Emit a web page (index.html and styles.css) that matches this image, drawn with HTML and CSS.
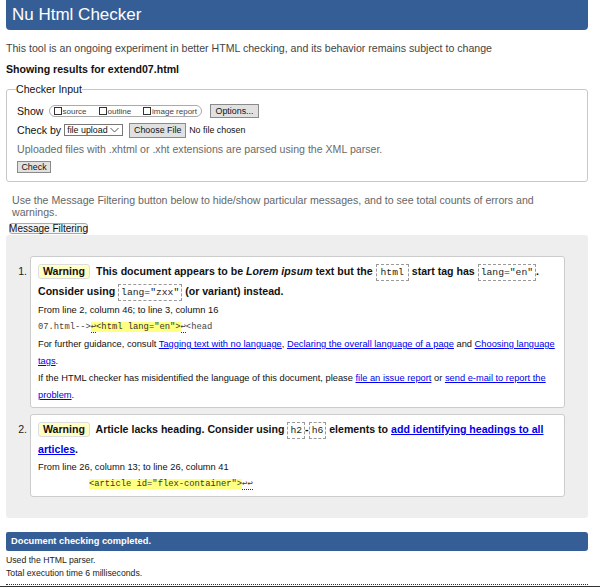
FILE: index.html
```html
<!DOCTYPE html>
<html lang="en">
<head>
<meta charset="utf-8">
<title>Nu Html Checker</title>
<link rel="stylesheet" href="styles.css">
</head>
<body>
<header class="title">Nu Html Checker</header>
<p class="intro">This tool is an ongoing experiment in better HTML checking, and its behavior remains subject to change</p>
<p class="showing">Showing results for extend07.html</p>
<fieldset class="checker">
  <legend>Checker Input</legend>
  <div class="row">
    <span class="lbl">Show</span>
    <span class="showbox">
      <span class="opt"><span class="cb"></span>source</span>
      <span class="opt"><span class="cb"></span>outline</span>
      <span class="opt"><span class="cb"></span>image report</span>
    </span>
    <span class="btn btn-options">Options...</span>
  </div>
  <div class="row row-check">
    <span class="lbl">Check by</span>
    <span class="select">file upload<svg class="chev" width="9" height="6" viewBox="0 0 9 6"><path d="M0.5 1 L4.5 5 L8.5 1" fill="none" stroke="#555" stroke-width="1"/></svg></span>
    <span class="btn btn-file">Choose File</span>
    <span class="nofile">No file chosen</span>
  </div>
  <p class="note">Uploaded files with .xhtml or .xht extensions are parsed using the XML parser.</p>
  <div class="btn btn-check">Check</div>
</fieldset>
<p class="filterinfo">Use the Message Filtering button below to hide/show particular messages, and to see total counts of errors and warnings.</p>
<div class="btn btn-filter">Message Filtering</div>
<div class="results">
  <ol class="msgs">
    <li class="msg">
      <p class="mtext"><span class="badge">Warning</span> This document appears to be <em>Lorem ipsum</em> text but the <code class="c c-wide">html</code> start tag has <code class="c">lang="en"</code>. Consider using <code class="c">lang="zxx"</code> (or variant) instead.</p>
      <p class="small">From line 2, column 46; to line 3, column 16</p>
      <p class="small ext"><span class="plain">07.html--&gt;</span><mark class="hl"><span class="lf">↩</span>&lt;html lang="en"&gt;</mark><span class="lf">↩</span><span class="plain">&lt;head</span></p>
      <p class="small">For further guidance, consult <a href="#">Tagging text with no language</a>, <a href="#">Declaring the overall language of a page</a> and <a href="#">Choosing language tags</a>.</p>
      <p class="small">If the HTML checker has misidentified the language of this document, please <a href="#">file an issue report</a> or <a href="#">send e-mail to report the problem</a>.</p>
    </li>
    <li class="msg">
      <p class="mtext"><span class="badge">Warning</span> Article lacks heading. Consider using <code class="c">h2</code>-<code class="c">h6</code> elements to <a href="#">add identifying headings to all articles</a>.</p>
      <p class="small">From line 26, column 13; to line 26, column 41</p>
      <p class="small ext"><span class="indent"></span><mark class="hl">&lt;article id="flex-container"&gt;</mark><span class="lf">↩↩</span></p>
    </li>
  </ol>
</div>
<div class="done">Document checking completed.</div>
<p class="stat stat-first">Used the HTML parser.</p>
<p class="stat">Total execution time 6 milliseconds.</p>
<div class="footline"></div>
<div class="edge"></div>
</body>
</html>
```
FILE: styles.css
```css
* { box-sizing: border-box; }
html, body { margin: 0; padding: 0; }
body {
  font-family: "Liberation Sans", Arial, sans-serif;
  font-size: 10.6px;
  color: #111;
  background: #fff;
  width: 600px;
  overflow: hidden;
}
p { margin: 0; }

.title {
  margin: 0 12px 0 6px;
  height: 30px;
  line-height: 30px;
  padding-left: 6px;
  background: #365e96;
  color: #fff;
  font-size: 17px;
  border-radius: 0 0 4px 4px;
}

.intro {
  margin: 11px 12px 0 6px;
  line-height: 14px;
  color: #444;
}
.showing {
  margin: 7px 12px 0 6px;
  line-height: 14px;
  font-weight: bold;
  color: #111;
}

.checker {
  margin: 6px 12px 0 6px;
  padding: 0 10px 8px 10px;
  border: 1px solid #c8c8c8;
  border-radius: 3px;
  min-width: 0;
}
.checker legend {
  padding: 0;
  margin-left: -1px;
  line-height: 14px;
  font-size: 10.6px;
  color: #111;
}

.row {
  display: flex;
  align-items: center;
  height: 16px;
  margin-top: 7px;
}
.row-check { margin-top: 3px; }
.lbl { color: #111; }

.showbox {
  display: inline-flex;
  align-items: center;
  height: 12px;
  margin-left: 5px;
  padding: 0 4px 0 4px;
  border: 1px solid #aaa;
  border-radius: 6px;
  font-size: 8px;
  color: #444;
  gap: 12px;
}
.opt { display: inline-flex; align-items: center; }
.cb {
  display: inline-block;
  width: 8px;
  height: 8px;
  border: 1px solid #333;
  margin-right: 1px;
  background: #fff;
}

.btn {
  display: inline-flex;
  align-items: center;
  justify-content: center;
  white-space: nowrap;
  background: #e1e1e1;
  border: 1px solid #8a8a8a;
  font-size: 8.9px;
  color: #111;
}
.btn-options {
  margin-left: 8px;
  width: 49px;
  height: 14px;
}
.select {
  display: inline-flex;
  align-items: center;
  justify-content: space-between;
  margin-left: 3px;
  width: 59px;
  height: 12px;
  padding: 0 3px 0 2px;
  border: 1px solid #777;
  background: #fff;
  font-size: 8.9px;
  white-space: nowrap;
}
.chev { display: block; }
.btn-file {
  margin-left: 6px;
  width: 57px;
  height: 15px;
}
.nofile {
  margin-left: 3px;
  font-size: 8.9px;
  white-space: nowrap;
}
.note {
  margin-top: 4px;
  line-height: 14px;
  color: #6a6a6a;
}
.btn-check {
  display: flex;
  margin-top: 5px;
  width: 34px;
  height: 12px;
}

.filterinfo {
  margin: 12px 40px 0 12px;
  line-height: 12px;
  color: #666;
}
.btn-filter {
  display: flex;
  margin: 5px 0 0 9px;
  width: 79px;
  height: 11px;
  font-size: 10px;
  background: #f4f4f4;
  border: 1px solid #aaa;
  border-radius: 3px;
}

.results {
  margin: 1px 12px 0 6px;
  padding: 21px 23px 21px 0;
  background: #eee;
  border-radius: 3px;
}
.msgs {
  margin: 0;
  padding: 0 0 0 24px;
}
.msg {
  background: #fff;
  border: 1px solid #ccc;
  border-radius: 3px;
  padding: 5px 8px 3px 7px;
  color: #111;
}
.msg + .msg { margin-top: 6px; }
.msg::marker { color: #222; font-weight: normal; }

.mtext {
  font-weight: bold;
  line-height: 19px;
  font-size: 10.6px;
}
.mtext em { font-style: italic; }
.badge {
  display: inline-block;
  line-height: 13px;
  padding: 0 4px;
  margin-right: 3px;
  background: #ffffc6;
  border: 1px solid #ddd;
  border-radius: 3px;
}
.c {
  font-family: "Liberation Mono", "DejaVu Sans Mono", monospace;
  font-weight: normal;
  font-size: 9.7px;
  padding: 2px 2px;
  border: 1px dashed #999;
  color: #222;
}
.c-wide { padding: 2px 4px; }
a { color: #0000ee; text-decoration: underline; }

.small {
  font-size: 9.3px;
  line-height: 17px;
  color: #111;
}
.ext {
  font-family: "Liberation Mono", "DejaVu Sans Mono", monospace;
  font-size: 8.8px;
  white-space: pre;
  color: #333;
}
.indent { display: inline-block; width: 51px; }
.hl { background: #ffff80; color: #333; }
.lf { border-bottom: 1px dotted #333; }
.plain { color: #444; }

.done {
  margin: 14px 12px 0 6px;
  height: 19px;
  line-height: 19px;
  padding-left: 5px;
  background: #365e96;
  color: #fff;
  font-weight: bold;
  font-size: 9.3px;
  border-radius: 2px 3px 3px 2px;
}
.stat {
  margin: 0 12px 0 6px;
  font-size: 8.7px;
  line-height: 13px;
  color: #222;
}
.stat-first { margin-top: 3px; }

.footline {
  margin: 4px 12px 0 6px;
  border-top: 1px dotted #333;
}
.edge {
  margin-top: 1px;
  height: 2px;
  background: #333;
}
```
